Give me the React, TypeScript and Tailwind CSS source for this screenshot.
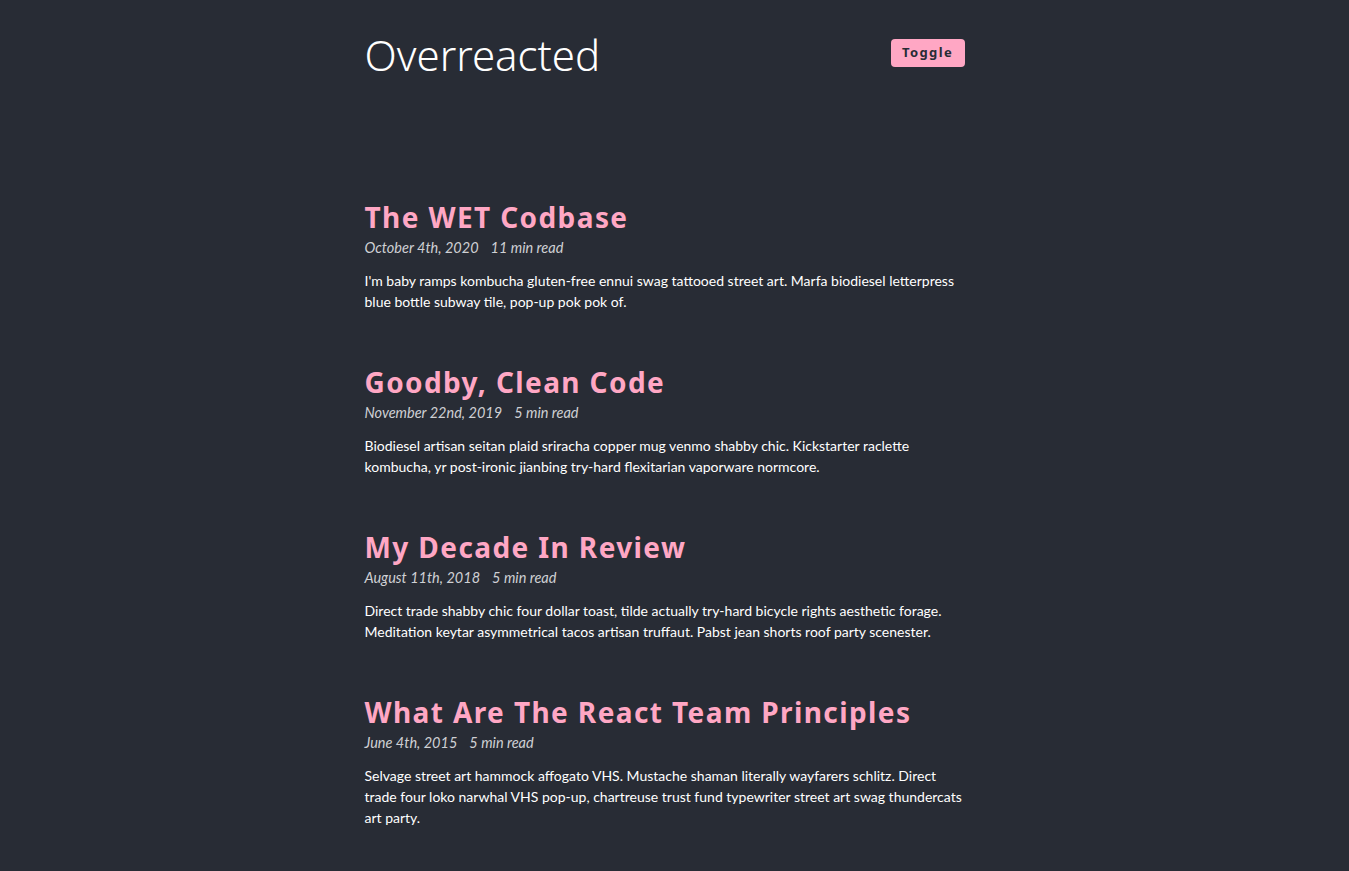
import { useState } from 'react';

type Post = {
  title: string;
  date: string;
  read: string;
  spoiler: string;
};

const posts: Post[] = [
  {
    title: 'The WET Codbase',
    date: 'October 4th, 2020',
    read: '11 min read',
    spoiler:
      "I'm baby ramps kombucha gluten-free ennui swag tattooed street art. Marfa biodiesel letterpress blue bottle subway tile, pop-up pok pok of.",
  },
  {
    title: 'Goodby, Clean Code',
    date: 'November 22nd, 2019',
    read: '5 min read',
    spoiler:
      'Biodiesel artisan seitan plaid sriracha copper mug venmo shabby chic. Kickstarter raclette kombucha, yr post-ironic jianbing try-hard flexitarian vaporware normcore.',
  },
  {
    title: 'My Decade In Review',
    date: 'August 11th, 2018',
    read: '5 min read',
    spoiler:
      'Direct trade shabby chic four dollar toast, tilde actually try-hard bicycle rights aesthetic forage. Meditation keytar asymmetrical tacos artisan truffaut. Pabst jean shorts roof party scenester.',
  },
  {
    title: 'What Are The React Team Principles',
    date: 'June 4th, 2015',
    read: '5 min read',
    spoiler:
      'Selvage street art hammock affogato VHS. Mustache shaman literally wayfarers schlitz. Direct trade four loko narwhal VHS pop-up, chartreuse trust fund typewriter street art swag thundercats art party.',
  },
];

const noto = { fontFamily: '"Noto Sans", "Open Sans", sans-serif' };

function PostItem({ post }: { post: Post }) {
  return (
    <article className="mb-[55px]">
      <h3
        className="text-[28px] leading-[31px] font-bold tracking-[1.4px] text-[#ffa7c4]"
        style={noto}
      >
        {post.title}
      </h3>
      <p className="mt-[5px] text-[14.5px] leading-[20px] italic text-[#cfd0d4]">
        {post.date}
        <span className="ml-3">{post.read}</span>
      </p>
      <p className="mt-[12px] text-[14px] leading-[21px] text-white">
        {post.spoiler}
      </p>
    </article>
  );
}

export default function App() {
  const [dark, setDark] = useState(true);

  return (
    <div
      className="min-h-screen bg-[#282c35]"
      style={{ fontFamily: 'Lato, "Noto Sans", sans-serif' }}
    >
      <div className="mx-auto w-[620px] pr-5 pt-[33px]">
        <header className="flex items-center justify-between">
          <h1
            className="text-[42px] leading-[44px] font-light text-white"
            style={noto}
          >
            Overreacted
          </h1>
          <button
            onClick={() => setDark(!dark)}
            className="mt-[-4px] h-[28px] w-[74px] rounded-[4px] bg-[#ffa7c4] text-[13px] font-bold tracking-[1.4px] text-[#282c35]"
            style={noto}
          >
            Toggle
          </button>
        </header>
        <main className="mt-[125px]">
          {posts.map((p) => (
            <PostItem key={p.title} post={p} />
          ))}
        </main>
      </div>
    </div>
  );
}
